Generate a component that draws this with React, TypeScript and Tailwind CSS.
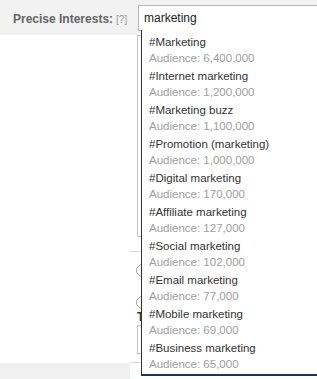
const items = [
  { name: "#Marketing", audience: "6,400,000" },
  { name: "#Internet marketing", audience: "1,200,000" },
  { name: "#Marketing buzz", audience: "1,100,000" },
  { name: "#Promotion (marketing)", audience: "1,000,000" },
  { name: "#Digital marketing", audience: "170,000" },
  { name: "#Affiliate marketing", audience: "127,000" },
  { name: "#Social marketing", audience: "102,000" },
  { name: "#Email marketing", audience: "77,000" },
  { name: "#Mobile marketing", audience: "69,000" },
  { name: "#Business marketing", audience: "65,000" },
]

const Radio = () => (
  <div className="w-[13px] h-[13px] rounded-full border border-[#9a9a9a] bg-white" />
)

export default function App() {
  return (
    <div className="relative w-[317px] h-[379px] overflow-hidden bg-white font-['Liberation_Sans',Arial,sans-serif]">
      {/* header row */}
      <div className="flex h-[35px] bg-[#f2f2f2]">
        <div className="w-[138px] shrink-0 whitespace-nowrap pl-[13px] pt-[10px] flex items-baseline gap-[3px]">
          <span className="text-[12px] font-bold text-[#666]">Precise Interests:</span>
          <span className="text-[10px] text-[#999]">[?]</span>
        </div>
        <div className="mt-[5px] h-[26px] w-[220px] shrink-0 border border-[#b7b7b7] bg-white pl-[5px] flex items-center text-[12px] text-[#222]">
          marketing
        </div>
      </div>

      {/* body behind the menu */}
      <div className="flex h-[344px]">
        <div className="w-[130px] shrink-0 flex flex-col">
          <div className="flex-1 bg-white" />
          <div className="h-[16px] bg-[#f0f0f0]" />
        </div>
        <div className="flex-1 flex flex-col">
          <div className="ml-[7px] h-[202px] border border-[#c4c4c4] bg-white" />
          <div className="mt-[14px] border-t border-[#dcdcdc]" />
          <div className="ml-[6px] mt-[12px]">
            <Radio />
          </div>
          <div className="ml-[6px] mt-[19px]">
            <Radio />
          </div>
          <div className="ml-[7px] mt-[1px] text-[12px] font-bold text-[#333] leading-[14px]">T</div>
          <div className="ml-[7px] mt-[1px] h-[29px] border border-[#c4c4c4]" />
          <div className="mt-[8px] border-t border-[#dcdcdc]" />
        </div>
      </div>

      {/* suggestion menu */}
      <div className="absolute left-[141px] top-[30px] w-[220px] bg-white border-l border-[#333] border-b-2 border-b-[#1f3261] pt-[3px] pb-[1px]">
        {items.map((item) => (
          <div key={item.name} className="h-[34px] pl-[7px] flex flex-col justify-center text-[11.5px] leading-[16px]">
            <div className="text-[#333]">{item.name}</div>
            <div className="text-[#a0a0a0]">Audience: {item.audience}</div>
          </div>
        ))}
      </div>
    </div>
  )
}
